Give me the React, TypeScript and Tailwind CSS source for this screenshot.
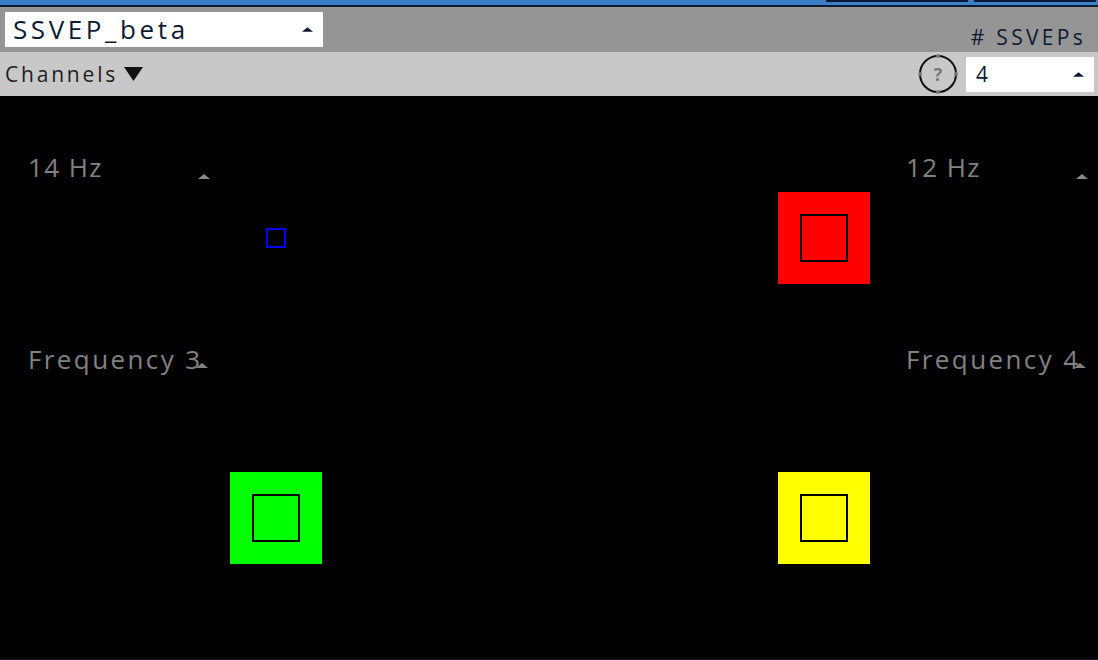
import React from "react";

const Up = ({ c, w = 12, h = 5 }: { c: string; w?: number; h?: number }) => (
  <svg width={w} height={h} viewBox="0 0 12 5" className="block">
    <polygon points="0,5 6,0 12,5" fill={c} />
  </svg>
);

function Stim({ color, small }: { color?: string; small?: boolean }) {
  if (small) {
    return <div className="w-[20px] h-[20px] border-2 border-[#0000ff]" />;
  }
  return (
    <div className="w-[92px] h-[92px] flex items-center justify-center" style={{ background: color }}>
      <div className="w-[48px] h-[48px] border-2 border-black" />
    </div>
  );
}

function Label({ text }: { text: string }) {
  return (
    <div className="flex items-end justify-between w-[182px] text-[26px] leading-none text-[#828282]">
      <span className="tracking-[1.4px]">{text}</span>
      <div className="mb-[1px]">
        <Up c="#8a8a8a" />
      </div>
    </div>
  );
}

export default function App() {
  return (
    <div className="w-[1098px] h-[660px] flex flex-col bg-black overflow-hidden" style={{ fontFamily: '"Open Sans", sans-serif' }}>
      {/* top blue strip */}
      <div className="h-[5px] bg-[#3a80c9] relative">
        <div className="absolute left-[826px] top-0 w-[142px] h-[2px] bg-[#0a1a33]" />
        <div className="absolute left-[974px] top-0 w-[122px] h-[2px] bg-[#0a1a33]" />
      </div>
      <div className="h-[2px] bg-[#0d1b2e]" />
      {/* gray header */}
      <div className="h-[45px] bg-[#959595] flex items-start justify-between pl-[5px] pr-[12px] pt-[5px]">
        <div className="w-[318px] h-[35px] bg-white flex items-center justify-between pl-[8px] pr-[10px]">
          <span className="text-[26px] leading-none text-[#0c1a33] mt-[-2px] tracking-[3.6px]">SSVEP_beta</span>
          <Up c="#0c1a33" w={11} h={5} />
        </div>
        <span className="text-[21px] leading-none text-[#0c1a33] mt-[15px] tracking-[3.3px]">#&nbsp;SSVEPs</span>
      </div>
      {/* light bar */}
      <div className="h-[44px] bg-[#c8c8c8] flex items-center justify-between pl-[5px] pr-[4px]">
        <div className="flex items-center gap-[6px] text-[21px] leading-none text-[#1e1e1e]">
          <span className="tracking-[2.8px]">Channels</span>
          <svg width="19" height="14" viewBox="0 0 19 14"><polygon points="0,0 19,0 9.5,14" fill="#111" /></svg>
        </div>
        <div className="flex items-center gap-[9px]">
          <div className="relative w-[38px] h-[38px] rounded-full border-2 border-[#111] flex items-center justify-center text-[18px] font-bold text-[#777] leading-none">
            ?
            <span className="absolute top-[-3px] left-[15px] w-[4px] h-[4px] rounded-full bg-[#777]" />
            <span className="absolute bottom-[-3px] left-[15px] w-[4px] h-[4px] rounded-full bg-[#777]" />
            <span className="absolute left-[-3px] top-[15px] w-[4px] h-[4px] rounded-full bg-[#777]" />
            <span className="absolute right-[-3px] top-[15px] w-[4px] h-[4px] rounded-full bg-[#777]" />
          </div>
          <div className="w-[128px] h-[35px] bg-white flex items-center justify-between pl-[10px] pr-[10px]">
            <span className="text-[21px] leading-none text-[#0c1a33]">4</span>
            <Up c="#0c1a33" w={11} h={5} />
          </div>
        </div>
      </div>
      {/* stimulus area */}
      <div className="relative flex-1 grid grid-cols-2 grid-rows-[284px_1fr] pb-[4px]">
        <div className="flex items-center justify-center pl-[2px]"><Stim small /></div>
        <div className="flex items-center justify-center"><Stim color="#ff0000" /></div>
        <div className="flex items-center justify-center pl-[2px]"><Stim color="#00ff00" /></div>
        <div className="flex items-center justify-center"><Stim color="#ffff00" /></div>
        <div className="absolute left-[28px] top-[58px]"><Label text="14 Hz" /></div>
        <div className="absolute left-[906px] top-[58px]"><Label text="12 Hz" /></div>
        <div className="absolute left-[28px] top-[250px] text-[26px] leading-none text-[#828282] tracking-[2.4px]">Frequency 3</div>
        <div className="absolute left-[906px] top-[250px] text-[26px] leading-none text-[#828282] tracking-[2.4px]">Frequency 4</div>
        <div className="absolute left-[196px] top-[267px]"><Up c="#828282" /></div>
        <div className="absolute left-[1074px] top-[267px]"><Up c="#828282" /></div>
        <div className="absolute left-0 right-0 bottom-0 h-[1px] bg-[#0a1a30]" />
      </div>
    </div>
  );
}
